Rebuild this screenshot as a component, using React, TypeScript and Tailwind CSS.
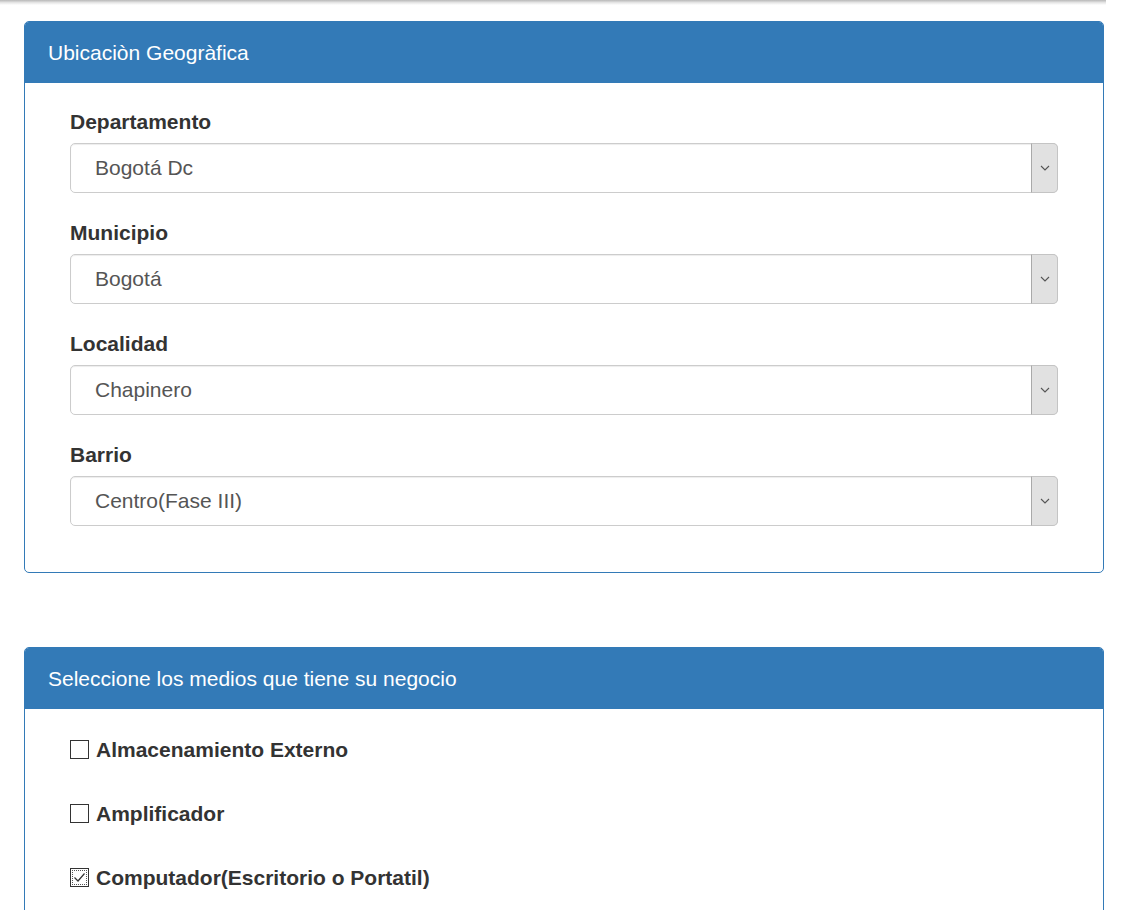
import React from "react";

const font = { fontFamily: '"Liberation Sans", Arial, sans-serif' };

function Select({ value }: { value: string }) {
  return (
    <div className="flex h-[50px] w-full rounded-[5px] border border-[#cccccc] bg-white shadow-[inset_0_1px_1px_rgba(0,0,0,0.075)]">
      <div className="flex flex-1 items-center pl-[24px] text-[21px] text-[#555555]">{value}</div>
      <div className="my-[-1px] mr-[-1px] flex w-[27px] items-center justify-center rounded-r-[5px] border border-[#c4c4c4] border-l-[#a9a9a9] bg-[#e1e1e1]">
        <svg width="10" height="6" viewBox="0 0 10 6">
          <path d="M1 1 L5 5 L9 1" fill="none" stroke="#555" strokeWidth="1.1" />
        </svg>
      </div>
    </div>
  );
}

function Field({ label, value }: { label: string; value: string }) {
  return (
    <div className="flex flex-col">
      <label className="mb-[8px] text-[21px] font-bold leading-[27px] text-[#333333]">{label}</label>
      <Select value={value} />
    </div>
  );
}

function Check({ label, checked }: { label: string; checked?: boolean }) {
  return (
    <div className="flex h-[27px] items-center gap-[7px]">
      <span
        className={
          "flex h-[19px] w-[19px] items-center justify-center border bg-white " +
          (checked ? "border-[#333333] outline-1 outline-dotted outline-offset-[-3px] outline-[#555]" : "border-[#333333]")
        }
      >
        {checked && (
          <svg width="13" height="11" viewBox="0 0 13 11">
            <path d="M1.5 5.5 L5 9 L11.5 1.5" fill="none" stroke="#333" strokeWidth="1.2" />
          </svg>
        )}
      </span>
      <span className="text-[21px] font-bold leading-[27px] text-[#333333]">{label}</span>
    </div>
  );
}

export default function App() {
  return (
    <div className="min-h-screen bg-white" style={font}>
      <div className="h-[5px] w-[1106px] bg-gradient-to-b from-[#b8b8b8] via-[#e4e4e4] to-white" />
      <div className="w-[1106px] pl-[24px] pr-[2px] pt-[16px] pb-[40px]">
        <div className="overflow-hidden rounded-[5px] border border-[#337ab7] bg-white">
          <div className="flex h-[61px] items-center bg-[#337ab7] px-[23px] text-[21px] text-white">
            Ubicaciòn Geogràfica
          </div>
          <div className="flex flex-col gap-[26px] px-[45px] pt-[25px] pb-[46px]">
            <Field label="Departamento" value="Bogotá Dc" />
            <Field label="Municipio" value="Bogotá" />
            <Field label="Localidad" value="Chapinero" />
            <Field label="Barrio" value="Centro(Fase III)" />
          </div>
        </div>

        <div className="mt-[74px] overflow-hidden rounded-[5px] border border-[#337ab7] bg-white">
          <div className="flex h-[61px] items-center bg-[#337ab7] px-[23px] text-[21px] text-white">
            Seleccione los medios que tiene su negocio
          </div>
          <div className="flex flex-col gap-[37px] px-[45px] pt-[27px] pb-[46px]">
            <Check label="Almacenamiento Externo" />
            <Check label="Amplificador" />
            <Check label="Computador(Escritorio o Portatil)" checked />
          </div>
        </div>
      </div>
    </div>
  );
}
